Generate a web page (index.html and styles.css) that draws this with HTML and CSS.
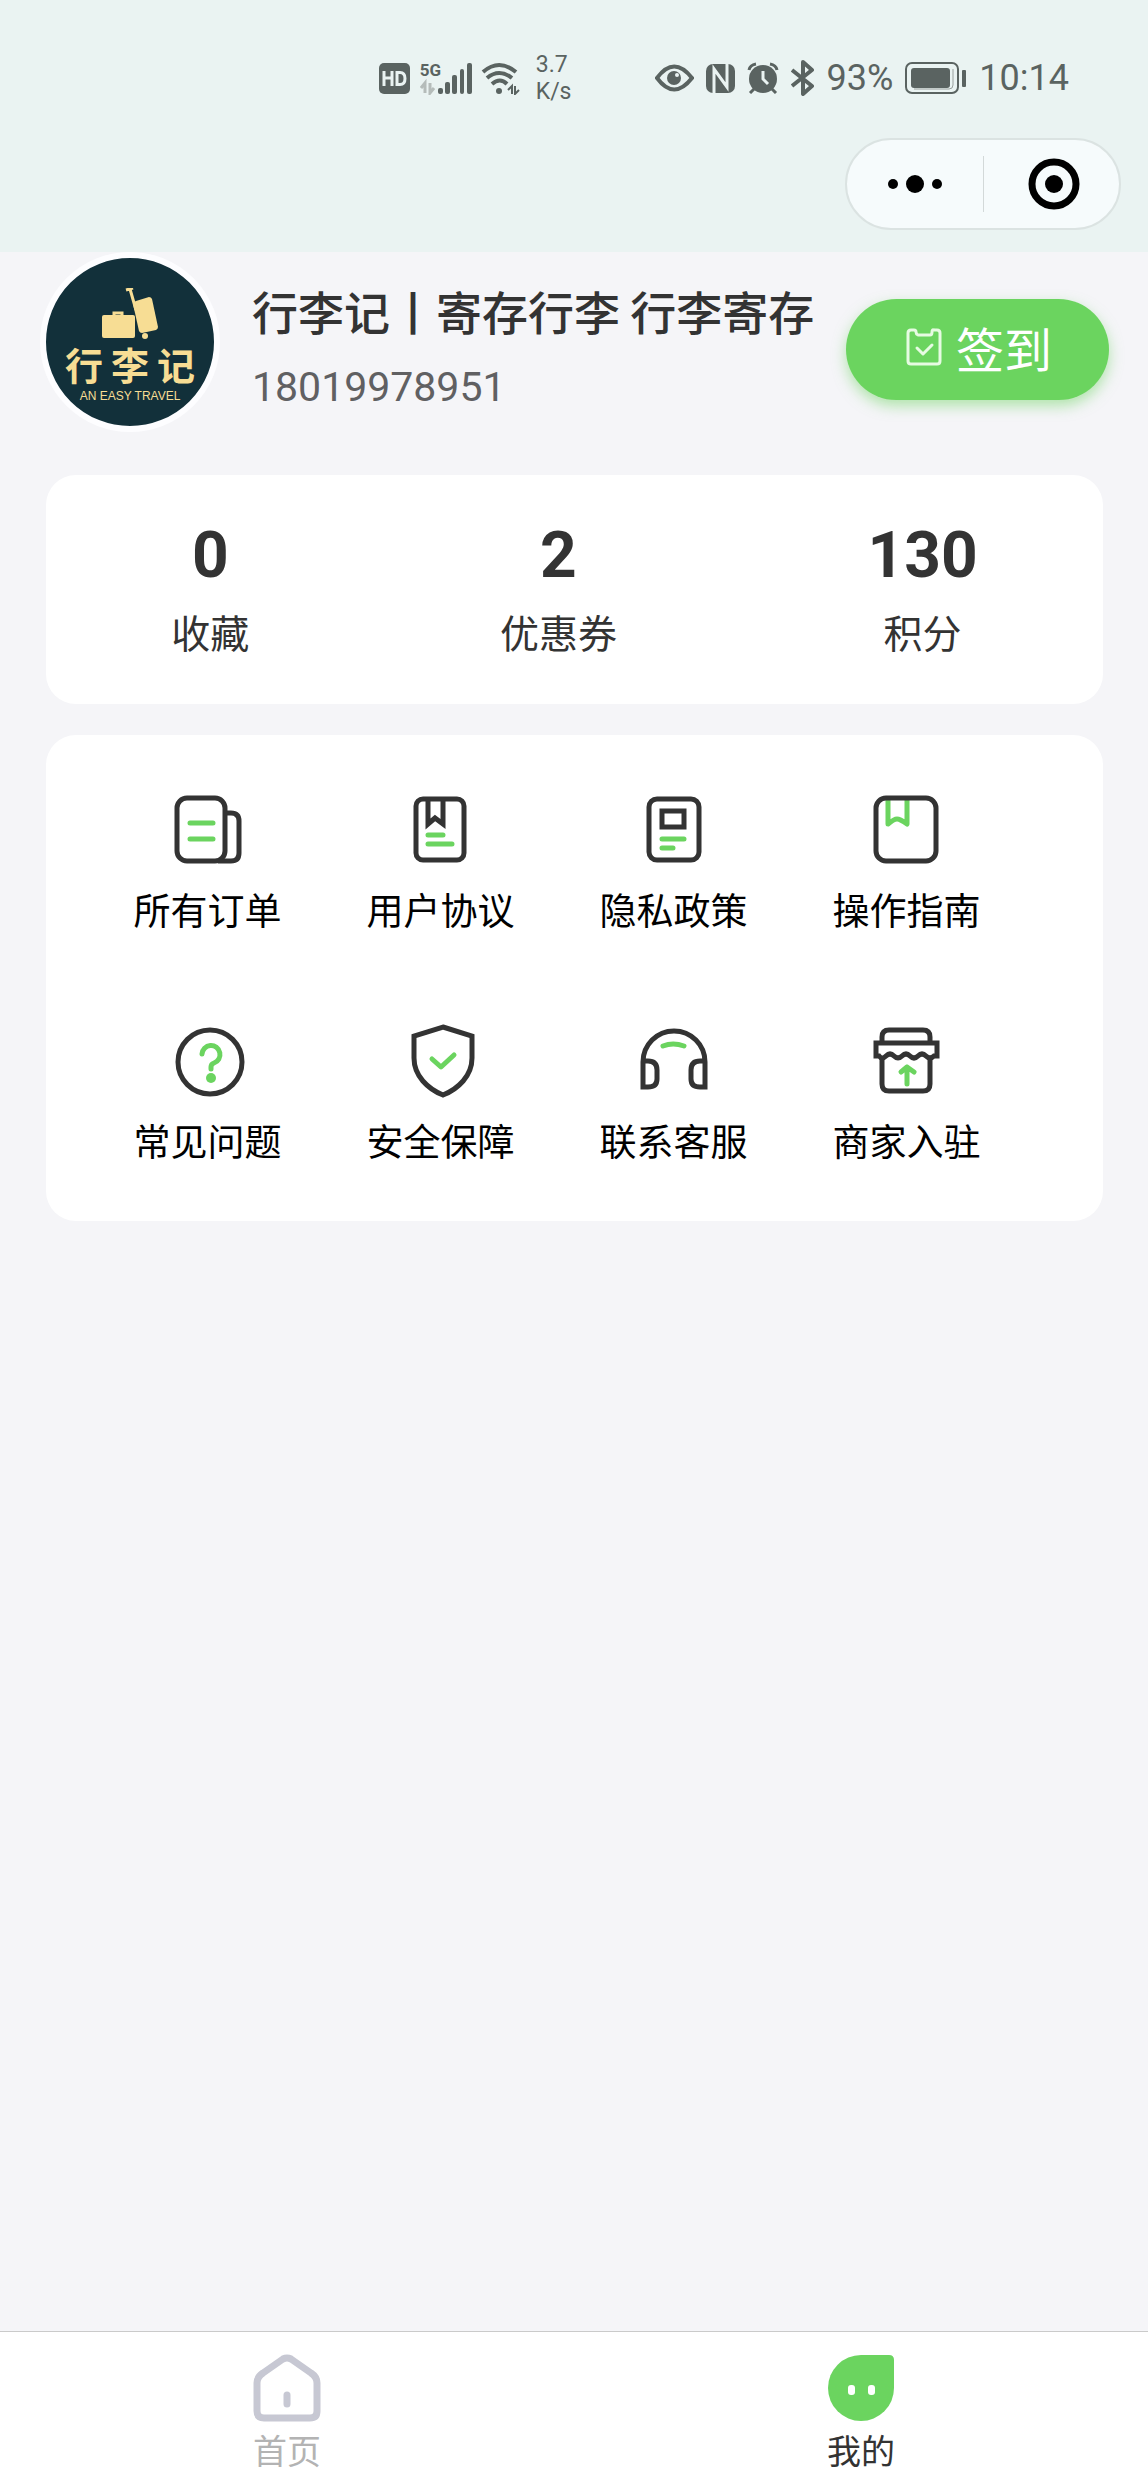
FILE: index.html
```
<!DOCTYPE html>
<html lang="zh-CN">
<head>
  <meta charset="UTF-8">
  <meta name="viewport" content="width=device-width, initial-scale=1">
  <title>我的</title>
  <link rel="stylesheet" href="styles.css">
</head>
<body>

  <header class="header">
    <div class="status-bar">
      <svg width="31" height="31" viewBox="0 0 31 31">
        <rect width="31" height="31" rx="5" fill="#5a6361"/>
        <path d="M5 8v15M13 8v15M5 15h8M18 9.500v12h3q5 0 5-6t-5-6z" fill="none" stroke="#eaf3f2" stroke-width="3"/>
      </svg>
      <div class="signal">
        <span class="signal-type">5G</span>
        <svg width="53" height="34" viewBox="0 0 53 34">
          <g fill="#5a6361">
            <rect x="18" y="27" width="5" height="6" rx="2"/>
            <rect x="25" y="21" width="5" height="12" rx="2"/>
            <rect x="32" y="14" width="5" height="19" rx="2"/>
            <rect x="40" y="8" width="4" height="25" rx="2"/>
            <rect x="47" y="2" width="5" height="31" rx="2"/>
          </g>
          <path d="M5 32V22l-4 5M10 22v10l4-5" fill="none" stroke="#b5bcba" stroke-width="3"/>
        </svg>
      </div>
      <svg width="39" height="34" viewBox="0 0 39 34" fill="none" stroke="#5a6361" stroke-width="4">
        <path d="M2 11q16-14 33 0M6 17q12-10 25 0M11 23q8-7 15 0"/>
        <circle cx="18" cy="30" r="3" fill="#5a6361" stroke="none"/>
        <path d="M31 33v-8l-4 4M34 25v8l4-4" stroke-width="2"/>
      </svg>
      <div class="net-speed">3.7<br>K/s</div>
      <svg width="39" height="28" viewBox="0 0 39 28">
        <path d="M2 14Q19-9 37 14Q19 37 2 14Z" fill="none" stroke="#5a6361" stroke-width="4"/>
        <circle cx="19" cy="14" r="7" fill="#5a6361"/>
        <circle cx="22" cy="11" r="2" fill="#eaf3f2"/>
      </svg>
      <svg width="29" height="30" viewBox="0 0 29 30">
        <rect x="0" y="1" width="29" height="29" rx="7" fill="#5a6361"/>
        <path d="M8 30V6l13 18V0" fill="none" stroke="#eaf3f2" stroke-width="3"/>
      </svg>
      <svg width="32" height="32" viewBox="0 0 32 32">
        <circle cx="16" cy="17" r="14" fill="#5a6361"/>
        <path d="M2 8q1-5 7-6M23 2q6 1 7 6M7 27l-4 4M25 27l4 4" fill="none" stroke="#5a6361" stroke-width="3"/>
        <path d="M16 9v8l5 5" fill="none" stroke="#eaf3f2" stroke-width="3"/>
      </svg>
      <svg width="24" height="36" viewBox="0 0 24 36">
        <path d="M1 10l20 16-9 8V2l9 8L1 26" fill="none" stroke="#5a6361" stroke-width="4" stroke-linejoin="round"/>
      </svg>
      <span>93%</span>
      <svg width="62" height="32" viewBox="0 0 62 32">
        <rect x="1" y="1" width="52" height="30" rx="6" fill="none" stroke="#5a6361" stroke-width="2"/>
        <rect x="6" y="6" width="39" height="20" rx="3" fill="#5a6361"/>
        <path d="M48 7v16q0 4-4 4H9" fill="none" stroke="#99a09e" stroke-width="1"/>
        <rect x="57" y="8" width="4" height="17" rx="1" fill="#5a6361"/>
      </svg>
      <span>10:14</span>
    </div>

    <div class="capsule">
      <button class="capsule-btn" type="button" aria-label="更多">
        <svg width="56" height="20" viewBox="0 0 56 20">
          <circle cx="6" cy="10" r="5"/>
          <circle cx="28" cy="10" r="9"/>
          <circle cx="50" cy="10" r="5"/>
        </svg>
      </button>
      <button class="capsule-btn" type="button" aria-label="关闭">
        <svg width="52" height="52" viewBox="0 0 52 52">
          <circle cx="26" cy="26" r="22" fill="none" stroke="#000" stroke-width="7"/>
          <circle cx="26" cy="26" r="9"/>
        </svg>
      </button>
    </div>
  </header>

  <main class="content">
    <section class="profile">
      <div class="avatar">
        <svg width="60" height="52" viewBox="0 0 60 52">
          <g fill="#f7dd94">
            <rect x="2" y="27" width="33" height="23" rx="2"/>
            <path d="M14 28v-3h8v3" fill="none" stroke="#f7dd94" stroke-width="3"/>
            <path d="M36 13L49 9q2 0 3 2l6 28q0 2-2 3l-14 3q-2 0-3-2l-6-27q0-2 3-3z"/>
            <path d="M26 2l7-2M30 1l6 21" fill="none" stroke="#f7dd94" stroke-width="3"/>
            <circle cx="45" cy="48" r="3"/>
          </g>
        </svg>
        <div class="avatar-name"><span>行</span><span>李</span><span>记</span></div>
        <div class="avatar-slogan">AN EASY TRAVEL</div>
      </div>
      <div class="user-info">
        <h1 class="user-name">行李记丨寄存行李 行李寄存</h1>
        <p class="user-phone">18019978951</p>
      </div>
      <button class="sign-btn" type="button">
        <svg width="36" height="38" viewBox="0 0 36 38" fill="none" stroke="#e6fbe2" stroke-width="3" stroke-linecap="round" stroke-linejoin="round">
          <path d="M5 2h3q2 0 2 2t2 3h12q2 0 2-3t2-2h3q3 0 3 3v28q0 3-3 3H5q-3 0-3-3V5q0-3 3-3z"/>
          <path d="M11 20l6 6 9-9"/>
        </svg>
        签到
      </button>
    </section>

    <section class="card stats">
      <a class="stat" href="#"><strong>0</strong><span>收藏</span></a>
      <a class="stat" href="#"><strong>2</strong><span>优惠券</span></a>
      <a class="stat" href="#"><strong>130</strong><span>积分</span></a>
    </section>

    <nav class="card menu">
      <a class="menu-item" href="#">
        <svg viewBox="0 0 80 80">
          <rect class="dark" x="9" y="8" width="48" height="63" rx="10"/>
          <path class="dark" d="M57 23h6q8 0 8 8v32q0 8-8 8H50"/>
          <path class="green" d="M22 33h23M22 49h23"/>
        </svg>
        所有订单
      </a>
      <a class="menu-item" href="#">
        <svg viewBox="0 0 80 80">
          <rect class="dark" x="15" y="9" width="48" height="61" rx="7"/>
          <path class="dark" d="M27 10v24l7-6 8 6V10"/>
          <path class="green" d="M27 45h15M27 54h24"/>
        </svg>
        用户协议
      </a>
      <a class="menu-item" href="#">
        <svg viewBox="0 0 80 80">
          <rect class="dark" x="15" y="9" width="50" height="61" rx="8"/>
          <rect class="dark" x="28" y="21" width="22" height="16"/>
          <path class="green" d="M28 49h22M28 58h11"/>
        </svg>
        隐私政策
      </a>
      <a class="menu-item" href="#">
        <svg viewBox="0 0 80 80">
          <path class="green" d="M21 10v24q6-5 9-5t10 5V10"/>
          <rect class="dark" x="9" y="8" width="60" height="63" rx="10"/>
        </svg>
        操作指南
      </a>
      <a class="menu-item" href="#">
        <svg viewBox="0 0 80 80">
          <circle class="dark" cx="42" cy="41" r="32"/>
          <path class="green" d="M34 33a9 9 0 1 1 12 9q-3 1-3 4v2"/>
          <circle cx="43" cy="57" r="5" fill="#6bd45f"/>
        </svg>
        常见问题
      </a>
      <a class="menu-item" href="#">
        <svg viewBox="0 0 80 80">
          <path class="dark" d="M42 6l29 9v22c0 18-14 31-29 37-15-6-29-19-29-37V15z"/>
          <path class="green" d="M31 38l9 8 13-12"/>
        </svg>
        安全保障
      </a>
      <a class="menu-item" href="#">
        <svg viewBox="0 0 80 80">
          <path class="dark" d="M9 40h5q9 0 9 9v9q0 8-9 8H9V41a31 31 0 0 1 62 0v25h-5q-9 0-9-8v-9q0-9 9-9h5"/>
          <path class="green" d="M29 25q10-4 21 0"/>
        </svg>
        联系客服
      </a>
      <a class="menu-item" href="#">
        <svg viewBox="0 0 80 80">
          <path class="dark" d="M15 22v-6q0-7 7-7h34q7 0 7 7v6M9 22h61v13H67q-4 4-8 0-4-4-8 0t-8 0q-4-4-8 0t-8 0q-4-4-8 0t-7 0H9z"/>
          <path class="dark" d="M15 38v25q0 7 7 7h34q7 0 7-7V38"/>
          <path class="green" d="M40 63V46M34 51l6-5 7 5"/>
        </svg>
        商家入驻
      </a>
    </nav>
  </main>

  <nav class="tab-bar">
    <a class="tab" href="#">
      <svg width="68" height="68" viewBox="0 0 68 68" fill="none" stroke="#c7c8d3" stroke-width="7" stroke-linecap="round" stroke-linejoin="round">
        <path d="M30 5q4-2 8 0l20 14q6 4 6 10v28q0 7-7 7H11q-7 0-7-7V29q0-6 6-10z"/>
        <path d="M34 41v9"/>
      </svg>
      首页
    </a>
    <a class="tab active" href="#" aria-current="page">
      <svg width="68" height="68" viewBox="0 0 68 68">
        <path d="M34 1h28q5 0 5 5v28A33 33 0 1 1 34 1z" fill="#6bd45f"/>
        <rect x="21" y="31" width="7" height="10" rx="3" fill="#fff"/>
        <rect x="41" y="31" width="7" height="10" rx="3" fill="#fff"/>
      </svg>
      我的
    </a>
  </nav>

</body>
</html>
```
FILE: styles.css
```
/* base */
* {
  box-sizing: border-box;
}

body {
  margin: 0;
  min-height: 100vh;
  display: flex;
  flex-direction: column;
  font-family: "Noto Sans CJK SC", sans-serif;
  background-color: #f5f5f8;
  color: #333;
}

a {
  color: inherit;
  text-decoration: none;
}

button {
  border: none;
  background: none;
  padding: 0;
  font-family: inherit;
  cursor: pointer;
}

svg {
  display: block;
  flex-shrink: 0;
}

/* status bar */
.header {
  background-color: #eaf3f2;
  padding: 18px 27px 22px;
}

.status-bar {
  display: flex;
  justify-content: flex-end;
  align-items: center;
  gap: 12px;
  height: 120px;
  padding-right: 52px;
  font-family: Roboto, sans-serif;
  font-size: 36px;
  color: #5a6361;
}

.signal {
  position: relative;
  margin: 0 -4px 0 -2px;
}

.signal-type {
  position: absolute;
  top: 0;
  left: 0;
  font-size: 17px;
  line-height: 18px;
  font-weight: bold;
}

.net-speed {
  margin: 0 71px 0 4px;
  font-size: 23px;
  line-height: 27px;
}

/* capsule */
.capsule {
  display: flex;
  width: 276px;
  height: 92px;
  margin-left: auto;
  border: 2px solid #dbe3e2;
  border-radius: 46px;
  background-color: #f6fbfc;
}

.capsule-btn {
  flex: 1;
  display: flex;
  align-items: center;
  justify-content: center;
}

.capsule-btn + .capsule-btn::before {
  content: "";
  width: 1px;
  height: 56px;
  margin-right: 44px;
  background-color: #d3d9d9;
}

.capsule-btn + .capsule-btn {
  justify-content: flex-start;
}

/* profile */
.content {
  flex: 1;
}

.profile {
  display: flex;
  align-items: center;
  padding: 0 39px 0 40px;
}

.avatar {
  display: flex;
  flex-direction: column;
  align-items: center;
  flex-shrink: 0;
  width: 180px;
  height: 180px;
  margin-bottom: 14px;
  padding-top: 30px;
  border: 6px solid #fdfdff;
  border-radius: 50%;
  background-color: #12303a;
  color: #f7dd94;
}

.avatar-name {
  display: flex;
  gap: 8px;
  font-size: 38px;
  line-height: 48px;
  font-weight: bold;
}

.avatar-slogan {
  font-family: "Liberation Sans", Arial, sans-serif;
  font-size: 12px;
  line-height: 16px;
  white-space: nowrap;
}

.user-info {
  flex: 1;
  margin-left: 32px;
  white-space: nowrap;
}

.user-name {
  margin: 0;
  font-size: 46px;
  line-height: 76px;
  font-weight: 500;
}

.user-phone {
  margin: 0;
  font-family: Roboto, sans-serif;
  font-size: 41px;
  line-height: 78px;
  color: #606062;
}

.sign-btn {
  display: flex;
  align-items: center;
  justify-content: center;
  gap: 14px;
  width: 263px;
  height: 101px;
  padding: 0 0 5px 3px;
  border-radius: 51px;
  background-color: #6bd45f;
  box-shadow: 0 6px 14px rgba(107, 212, 95, 0.5);
  color: #fff;
  font-size: 48px;
}

/* cards */
.card {
  margin: 0 45px 0 46px;
  border-radius: 30px;
  background-color: #fff;
}

.stats {
  display: flex;
  justify-content: space-around;
  margin-top: 29px;
  padding: 43px 0 45px;
}

.stat {
  display: flex;
  flex-direction: column;
  align-items: center;
  gap: 9px;
  font-size: 39px;
  line-height: 56px;
}

.stat strong {
  font-family: Roboto, sans-serif;
  font-size: 64px;
  line-height: 76px;
}

.menu {
  display: grid;
  grid-template-columns: repeat(4, 1fr);
  row-gap: 87px;
  margin-top: 31px;
  padding: 55px 80px 56px 45px;
}

.menu-item {
  display: flex;
  flex-direction: column;
  align-items: center;
  gap: 14px;
  font-size: 37px;
  line-height: 50px;
  color: #000;
}

.menu-item svg {
  width: 80px;
  height: 80px;
  fill: none;
  stroke-width: 5;
}

.dark {
  stroke: #333;
}

.green {
  stroke: #6bd45f;
  stroke-linecap: round;
  stroke-linejoin: round;
}

/* tab bar */
.tab-bar {
  display: flex;
  border-top: 1px solid #cacaca;
  background-color: #fff;
}

.tab {
  flex: 1;
  display: flex;
  flex-direction: column;
  align-items: center;
  gap: 3px;
  padding: 22px 0 17px;
  font-size: 34px;
  line-height: 50px;
  color: #b3b3b3;
}

.tab.active {
  color: #333;
}
```
